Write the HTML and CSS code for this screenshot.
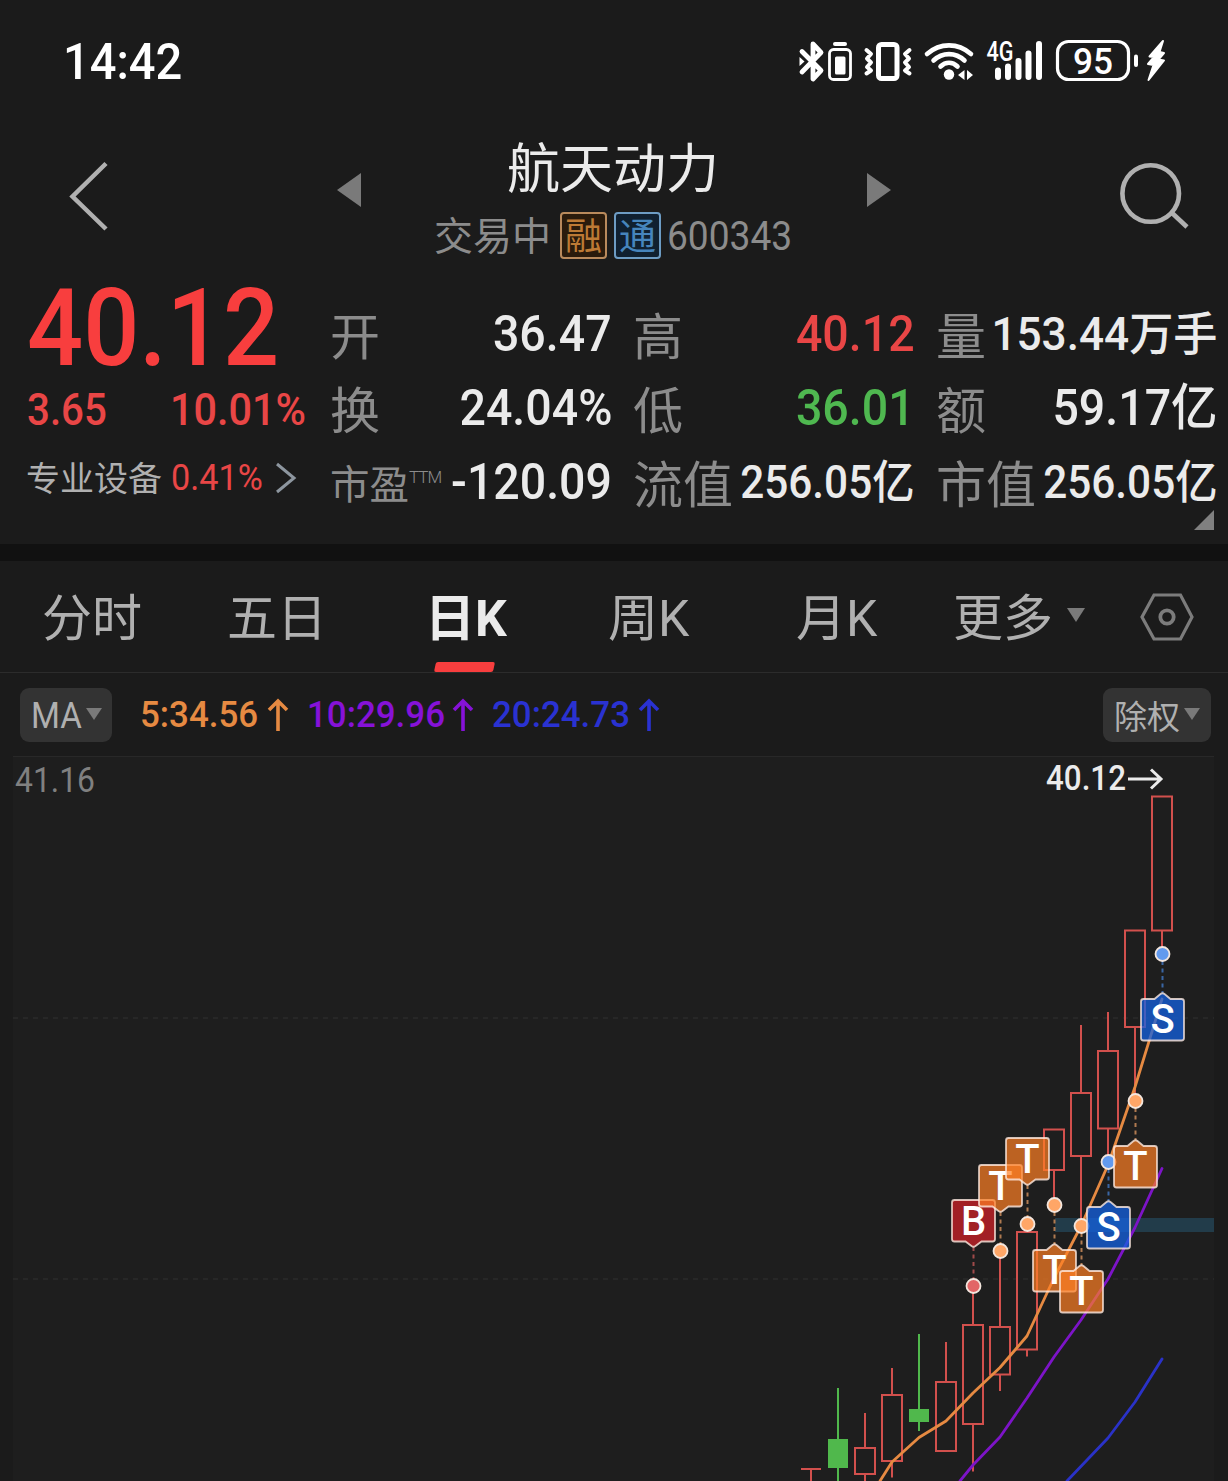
FILE: index.html
```html
<!DOCTYPE html>
<html lang="zh-CN">
<head>
<meta charset="utf-8">
<title>航天动力 600343</title>
<link rel="stylesheet" href="styles.css">
</head>
<body>
<div class="screen">
  <div class="status">
    <span class="clock num">14:42</span>
    <svg class="status-icons" width="372" height="52" viewBox="798 36 372 52" fill="none" stroke="#fff" stroke-linecap="round" stroke-linejoin="round">
      <path d="M802 51.500 821 70.500 813 79V44L821 52.500 802 72" stroke-width="4.800"/>
      <path d="M799.500 57v9l5-4.500z" fill="#fff" stroke="none"/>
      <rect x="829.500" y="49.500" width="21" height="30" rx="4" stroke-width="2.800"/>
      <path d="M835 44h10" stroke-width="4"/>
      <rect x="835" y="56.500" width="10.500" height="18" rx="1.500" fill="#fff" stroke="none"/>
      <rect x="878.500" y="44.500" width="18.500" height="34" rx="3" stroke-width="5"/>
      <path d="M866.500 50l4.500 4-4 4.500 4 4-4 4.500 4 3.500-4.500 3M909.500 50l-4.500 4 4 4.500-4 4 4 4.500-4 3.500 4.500 3" stroke-width="4"/>
      <path d="M927 54c13-11.500 31-11.500 44 0M933.500 60.500c9-8.500 22-8.500 31 0M940.500 66.500c5-5 12-5 17 0" stroke-width="4.600"/>
      <circle cx="949" cy="74.500" r="5.200" fill="#fff" stroke="none"/>
      <path d="M964.500 70v10l-6.500-5zM967 70v10l6-5z" fill="#fff" stroke="none"/>
      <text x="986.500" y="60.500" class="g4" textLength="27" lengthAdjust="spacingAndGlyphs">4G</text>
      <path d="M998 70.500v6.500M1008 66.500v10.500M1018.500 61v16M1028.500 53.500v23.500M1039 44v33" stroke-width="6"/>
      <rect x="1057.500" y="41.500" width="71" height="38" rx="11" stroke-width="3.200"/>
      <path d="M1136 56.500v8.500" stroke-width="4"/>
      <text x="1073" y="74" class="pct" textLength="40" lengthAdjust="spacingAndGlyphs">95</text>
      <path d="M1163 41 1149.500 56.500l4.500.5-6 7 5.500 1-5 15 15.500-19.500-5.500-1 5.500-6.500-4.500-1z" fill="#fff" stroke-width="2"/>
    </svg>
  </div>

  <div class="header">
    <svg class="back" width="40" height="72" viewBox="69 160 40 72" fill="none" stroke="#b0b0b0" stroke-width="4.500"><path d="M106 163.500 72.500 196.500 106 229"/></svg>
    <svg class="prev" width="24" height="34" viewBox="0 0 24 34" fill="#7a7a7a"><path d="M24 0v34L0 17z"/></svg>
    <div class="title">
      <div class="name">航天动力</div>
      <div class="sub"><span class="state">交易中</span><span class="badge rong">融</span><span class="badge tong">通</span><span class="code num">600343</span></div>
    </div>
    <svg class="next" width="24" height="34" viewBox="0 0 24 34" fill="#7a7a7a"><path d="M0 0v34l24-17z"/></svg>
    <svg class="search" width="70" height="68" viewBox="1119 161 70 68" fill="none" stroke="#b0b0b0" stroke-width="4.600"><circle cx="1150.700" cy="193.500" r="28.300"/><path d="M1171 212l16 15"/></svg>
  </div>

  <div class="quote">
    <div class="last">
      <div class="price num">40.12</div>
      <div class="change"><span class="num diff">3.65</span><span class="num rate">10.01%</span></div>
      <div class="sector"><span class="sector-name">专业设备</span><span class="num sector-rate">0.41%</span><svg width="22" height="32" viewBox="0 0 22 32" fill="none" stroke="#8d969f" stroke-width="3"><path d="M2 2l17 14L2 30"/></svg></div>
    </div>
    <div class="grid">
      <div class="cell"><span class="label">开</span><span class="val num">36.47</span></div>
      <div class="cell"><span class="label">高</span><span class="val num up">40.12</span></div>
      <div class="cell"><span class="label">量</span><span class="val num volume">153.44万手</span></div>
      <div class="cell"><span class="label">换</span><span class="val num">24.04%</span></div>
      <div class="cell"><span class="label">低</span><span class="val num down">36.01</span></div>
      <div class="cell"><span class="label">额</span><span class="val num">59.17亿</span></div>
      <div class="cell"><span class="label pe">市盈<sup>TTM</sup></span><span class="val num">-120.09</span></div>
      <div class="cell"><span class="label">流值</span><span class="val num small">256.05亿</span></div>
      <div class="cell"><span class="label">市值</span><span class="val num small">256.05亿</span></div>
    </div>
    <svg class="corner" width="20" height="20" viewBox="0 0 20 20" fill="#808080"><path d="M20 0v20H0z"/></svg>
  </div>

  <div class="tabs">
    <span class="tab t1">分时</span><span class="tab t2">五日</span><span class="tab t3 active">日K</span><span class="tab t4">周K</span><span class="tab t5">月K</span>
    <span class="tab t6">更多</span><svg class="more" width="18" height="14" viewBox="0 0 18 14" fill="#7a7a7a"><path d="M0 0h18L9 14z"/></svg>
    <svg class="gear" width="54" height="50" viewBox="1140 592 54 50" fill="none" stroke="#7c7c7c" stroke-width="3.200"><path d="M1154 595h26.500l11.500 22-11.500 22H1154l-12-22z"/><circle cx="1167" cy="617" r="6.700" stroke-width="3.800"/></svg>
  </div>

  <div class="legend">
    <span class="btn ma"><span class="ma-text">MA</span><svg width="16" height="12" viewBox="0 0 16 12" fill="#7a7a7a"><path d="M0 0h16L8 12z"/></svg></span>
    <span class="avg m5"><span class="num">5:34.56</span><svg width="22" height="34" viewBox="0 0 22 34"><path d="M11 33V3M2 12l9-9 9 9"/></svg></span>
    <span class="avg m10"><span class="num">10:29.96</span><svg width="22" height="34" viewBox="0 0 22 34"><path d="M11 33V3M2 12l9-9 9 9"/></svg></span>
    <span class="avg m20"><span class="num">20:24.73</span><svg width="22" height="34" viewBox="0 0 22 34"><path d="M11 33V3M2 12l9-9 9 9"/></svg></span>
    <span class="btn adj"><span>除权</span><svg width="16" height="12" viewBox="0 0 16 12" fill="#7a7a7a"><path d="M0 0h16L8 12z"/></svg></span>
  </div>

  <svg class="chart" width="1201" height="725" viewBox="13 756 1201 725">
    <defs>
      <path id="pin-up" d="M-19-15h11l6-5q2-1.500 4 0l6 5h11q2.500 0 2.500 2.500v36.500q0 2.500-2.500 2.500h-38q-2.500 0-2.500-2.500v-36.500q0-2.500 2.500-2.500z"/>
      <path id="pin-down" d="M-19-21h38q2.500 0 2.500 2.500v36.500q0 2.500-2.500 2.500h-11l-6 4.500q-2 1.500-4 0l-6-4.500h-11q-2.500 0-2.500-2.500v-36.500q0-2.500 2.500-2.500z"/>
    </defs>
    <path d="M13 756.500h1201" stroke="#282828"/>
    <path d="M13 1018h1201M13 1279h1201" stroke="#2b2b2b" stroke-width="1.500" stroke-dasharray="5 5"/>
    <path class="band" d="M1055 1218h159v14h-159z"/>
    <g class="rise">
      <path d="M1152 796.500h20v134h-20zM1162 931v23"/>
      <path d="M1125 930.500h20V1027h-20zM1135 1027v74"/>
      <path d="M1098 1051h20v77.500h-20zM1108 1012v39M1108 1128.500V1162"/>
      <path d="M1071 1093h20v63h-20zM1081 1025v68M1081 1156v70"/>
      <path d="M1044 1129.500h20V1170h-20zM1054 1170v35"/>
      <path d="M1017 1232h20v117.500h-20zM1027 1224v8M1027 1349.500v7"/>
      <path d="M990 1327h20v47.500h-20zM1000 1251v76M1000 1374.500V1391"/>
      <path d="M963 1325h20v99h-20zM973 1286v39M973 1424v47.500"/>
      <path d="M936 1382h20v69h-20zM946 1342v40"/>
      <path d="M882 1395h20v66h-20zM892 1368v27M892 1461v16.500"/>
      <path d="M855 1448h20v26h-20zM865 1413v35M865 1474v7"/>
      <path d="M801 1469h20M811 1469v12"/>
    </g>
    <g class="fall">
      <path d="M909 1409h20v13h-20zM918 1334h2v97h-2z"/>
      <path d="M828 1439h20v29h-20zM837 1388h2v93h-2z"/>
    </g>
    <g class="lines">
      <path stroke="#e68a42" d="M880 1481l12-19 27-24.500 27-16.500 27-28 27-25.500 27-31.500 27-58 27-52 27-61 27-78 27-88"/>
      <path stroke="#7d14c8" d="M960 1481l13-16 27-28 27-39 27-41 27-37 27-41 27-51.500 27-59"/>
      <path stroke="#2a32c8" d="M1067 1481l41-43 27-36 27-43"/>
    </g>
    <g class="stems">
      <path class="bs" d="M1162.500 961v32M1108.500 1169v32"/>
      <path class="ts" d="M1135.500 1108v32M1054.500 1212v32M1081.500 1233v32M1027.500 1185v32M1000.500 1212v32"/>
      <path class="rs" d="M973.500 1247v32"/>
    </g>
    <g class="dots">
      <circle cx="1162.500" cy="954" r="7" fill="#629aee"/><circle cx="1108.500" cy="1162" r="7" fill="#629aee"/>
      <circle cx="1135.500" cy="1101" r="7" fill="#ffa667"/><circle cx="1054.500" cy="1205" r="7" fill="#ffa667"/>
      <circle cx="1081.500" cy="1226" r="7" fill="#ffa667"/><circle cx="1027.500" cy="1224" r="7" fill="#ffa667"/>
      <circle cx="1000.500" cy="1251" r="7" fill="#ffa667"/><circle cx="973.500" cy="1286" r="7" fill="#e26566"/>
    </g>
    <g class="pins">
      <g class="b" transform="translate(973.500 1221)"><use href="#pin-down"/><text y="14">B</text></g>
      <g class="t" transform="translate(1000.500 1186)"><use href="#pin-down"/><text y="14">T</text></g>
      <g class="t" transform="translate(1027.500 1159)"><use href="#pin-down"/><text y="14">T</text></g>
      <g class="t" transform="translate(1054.500 1265)"><use href="#pin-up"/><text y="19">T</text></g>
      <g class="t" transform="translate(1081.500 1286)"><use href="#pin-up"/><text y="19">T</text></g>
      <g class="s" transform="translate(1108.500 1222)"><use href="#pin-up"/><text y="18.500">S</text></g>
      <g class="t" transform="translate(1135.500 1161)"><use href="#pin-up"/><text y="19">T</text></g>
      <g class="s" transform="translate(1162.500 1014)"><use href="#pin-up"/><text y="18.500">S</text></g>
    </g>
    <text class="axis" x="15" y="791.500" textLength="80" lengthAdjust="spacingAndGlyphs">41.16</text>
    <text class="peak" x="1046" y="789.500" textLength="80" lengthAdjust="spacingAndGlyphs">40.12</text>
    <path class="arrow" d="M1128 779h32M1151 769.500l10 9.500-10 9.500"/>
  </svg>
</div>
</body>
</html>
```
FILE: styles.css
```css
* { box-sizing: border-box; }
body {
  margin: 0;
  background: #1b1b1b;
  color: #ebebeb;
  font-family: Roboto, "Noto Sans CJK SC", sans-serif;
}
svg { display: block; flex: none; }
.screen {
  width: 1228px;
  height: 1481px;
  overflow: hidden;
  display: flex;
  flex-direction: column;
}
.num { display: inline-block; white-space: nowrap; transform-origin: left center; }

.status {
  height: 124px;
  padding: 0 58px 0 63px;
  display: flex;
  align-items: center;
  justify-content: space-between;
}
.clock { font-size: 50px; font-weight: 500; line-height: 60px; color: #fff; transform: scaleX(.94); }
.g4, .pct { fill: #fff; stroke: none; font-weight: 500; }
.g4 { font-size: 27px; }
.pct { font-size: 36px; }

.header {
  height: 152px;
  padding: 0 39px 0 69px;
  display: flex;
  align-items: flex-start;
}
.back { margin-top: 36px; }
.prev { margin: 49px 0 0 228px; }
.title { flex: 1; display: flex; flex-direction: column; align-items: center; padding-top: 14px; }
.name { font-size: 53px; line-height: 62px; padding-top: 1px; margin-right: 2px; }
.sub { display: flex; align-items: center; height: 47px; margin-top: 11px; color: #8c8c8c; width: 360px; }
.sub > * { flex: none; }
.state { font-size: 39px; line-height: 47px; padding-top: 3px; white-space: nowrap; }
.badge {
  width: 47px; height: 47px;
  border: 2px solid; border-radius: 4px;
  font-size: 37px; line-height: 47px; text-align: center;
}
.rong { color: #bd7a35; border-color: #b98a5c; background: #2a1b0c; margin-left: 9px; }
.tong { color: #4685bd; border-color: #6d9cc4; background: #102030; margin-left: 7px; }
.code { font-size: 41px; margin-left: 6px; transform: scaleX(.905); }
.next { margin-top: 49px; }
.search { margin: 37px 0 0 228px; }

.quote { position: relative; height: 268px; display: flex; }
.last { width: 331px; padding-left: 27px; color: #f04444; }
.price { font-size: 108px; font-weight: 500; line-height: 104px; color: #f83e3e; transform: scaleX(.915); }
.change { display: flex; height: 60px; align-items: center; font-size: 44px; font-weight: 500; color: #e94646; }
.diff { width: 143px; transform: scaleX(.915); }
.rate { transform: scaleX(.94); }
.sector { display: flex; align-items: center; height: 76px; font-size: 34px; color: #b0b0b0; }
.sector-name { margin: -4px 0 0 -1px; }
.sector-rate { font-size: 36px; width: 104px; color: #e94646; margin-left: 9px; transform: scaleX(.95); }
.grid {
  display: grid;
  grid-template-columns: 281px 281px 281px;
  grid-template-rows: 74px 74px 74px;
  column-gap: 22px;
  align-content: start;
  padding-top: 21px;
}
.cell { display: flex; align-items: center; justify-content: space-between; }
.label { flex: none; font-size: 50px; color: #8c8c8c; line-height: 74px; margin: 0 -39px 0 -1px; padding-top: 7px; white-space: nowrap; }
.pe { font-size: 39.500px; }
.pe sup { font-size: 17px; font-weight: 300; line-height: 0; vertical-align: 16px; letter-spacing: -1px; }
.val { font-size: 50px; font-weight: 500; line-height: 74px; color: #ebebeb; transform-origin: right center; transform: scaleX(.93); }
.val.volume { font-size: 46px; transform: scaleX(.96); }
.val.small { font-size: 46px; transform: scaleX(.92); }
.val.up { color: #e94646; }
.val.down { color: #4fb850; }
.corner { position: absolute; right: 14px; bottom: 14px; }

.tabs {
  height: 129px;
  border-top: 17px solid #111;
  border-bottom: 1px solid #2c2c2c;
  padding-left: 42px;
  display: flex;
  align-items: center;
  color: #b0b0b0;
}
.tab { flex: none; font-size: 50px; line-height: 111px; height: 111px; padding-top: 3px; white-space: nowrap; }
.t1 { width: 185px; }
.t2 { width: 198px; }
.t3 { width: 183px; }
.t4 { width: 188px; }
.t5 { width: 157px; }
.t6 { width: 114px; }
.active { position: relative; font-weight: 700; color: #ebebeb; }
.active::after {
  content: "";
  position: absolute;
  left: 10px; bottom: 0;
  width: 59px; height: 10px;
  background: #f83e3e;
  transform: skewX(-12deg);
  border-radius: 2px;
}
.more { margin-top: -4px; }
.gear { margin-left: 55px; }

.legend { height: 83px; padding: 0 17px 0 20px; display: flex; align-items: center; }
.btn {
  height: 54px; border-radius: 9px; background: #333; color: #b0b0b0;
  display: flex; align-items: center; gap: 5px; font-size: 33px; padding: 0 11px;
}
.btn svg { margin-top: -1px; }
.ma { width: 92px; margin-right: 28px; }
.ma-text { font-size: 36px; width: 50px; padding-top: 2px; white-space: nowrap; transform: scaleX(.92); transform-origin: left center; }
.adj { width: 108px; margin-left: auto; gap: 4px; white-space: nowrap; }
.avg { display: flex; align-items: center; font-size: 36px; font-weight: 500; }
.avg .num { transform: scaleX(.97); padding-top: 1px; }
.avg svg { fill: none; stroke: currentColor; stroke-width: 3.600; margin-left: auto; }
.m5 { color: #e68a42; width: 167px; }
.m10 { color: #8612d8; width: 185px; }
.m20 { color: #2a32d2; width: 168px; }
.m5 svg, .m10 svg { margin-right: 18px; }

.chart { margin-left: 13px; background: #1e1e1e; }
.band { fill: #223c4a; }
.rise { fill: none; stroke: #d2504d; stroke-width: 2; }
.fall { fill: #50b84c; }
.lines { fill: none; stroke-width: 2.800; stroke-linejoin: round; stroke-linecap: round; }
.stems { stroke-width: 2; stroke-dasharray: 4 3.500; }
.bs { stroke: #3a66a4; }
.ts { stroke: #b07a50; }
.rs { stroke: #a04a4a; }
.dots { stroke: #f3e6de; stroke-width: 1.800; }
.pins { stroke: rgba(255, 235, 225, .8); stroke-width: 1.800; }
.pins .t { fill: rgba(255, 127, 36, .7); }
.pins .s { fill: rgba(20, 98, 225, .75); }
.pins .b { fill: rgba(195, 33, 39, .8); }
.pins text { fill: #fff; stroke: none; font-size: 40px; font-weight: 500; text-anchor: middle; }
.axis { fill: #808080; font-size: 35px; }
.peak { fill: #ebebeb; font-size: 35px; font-weight: 500; }
.arrow { fill: none; stroke: #ebebeb; stroke-width: 3; }
```
